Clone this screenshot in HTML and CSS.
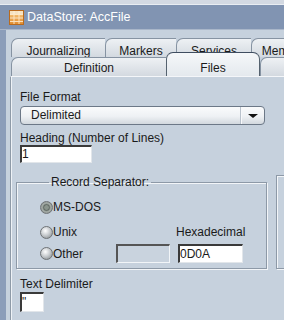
FILE: index.html
```html
<!DOCTYPE html>
<html lang="en">
<head>
    <meta charset="UTF-8">
    <title>DataStore: AccFile</title>
    <link rel="stylesheet" href="styles.css">
</head>
<body>
    <div class="strip"></div>
    <div class="titlebar">
        <svg class="app-icon" width="15" height="15" viewBox="0 0 15 15">
            <defs>
                <linearGradient id="og" x1="0" y1="0" x2="0" y2="1">
                    <stop offset="0" stop-color="#fbd08a"/>
                    <stop offset="1" stop-color="#e08a2c"/>
                </linearGradient>
            </defs>
            <rect x="0.5" y="0.5" width="14" height="14" fill="url(#og)" stroke="#b86a1e"/>
            <rect x="1" y="1" width="13" height="3" fill="#f6e2c0"/>
            <path d="M1 4.5H14M1 8H14M1 11.5H14M5 1V14M10 1V14" stroke="#fff3df" stroke-width="1" opacity="0.8"/>
        </svg>
        <span class="title">DataStore: AccFile</span>
    </div>
    <div class="frame">
        <div class="tabrow back">
            <div class="tab w94">Journalizing</div>
            <div class="tab w71">Markers</div>
            <div class="tab w75">Services</div>
            <div class="tab w54">Memo</div>
        </div>
        <div class="tabrow front">
            <div class="tab w155">Definition</div>
            <div class="tab w94 active">Files</div>
            <div class="tab w95"></div>
        </div>
        <div class="panel">
            <div class="label">File Format</div>
            <div class="combo">
                <span class="combo-text">Delimited</span>
                <span class="combo-btn"><span class="arrow"></span></span>
            </div>
            <div class="label gap">Heading (Number of Lines)</div>
            <div class="input w72">1</div>

            <div class="groups">
                <fieldset class="group sep">
                    <legend>Record Separator:</legend>
                    <div class="sep-grid">
                        <div class="radio-row r1"><span class="radio on"></span>MS-DOS</div>
                        <div class="radio-row r2"><span class="radio"></span>Unix</div>
                        <div class="hex-label">Hexadecimal</div>
                        <div class="radio-row r3"><span class="radio"></span>Other</div>
                        <div class="input disabled other"></div>
                        <div class="input hex">0D0A</div>
                    </div>
                </fieldset>
                <fieldset class="group next"></fieldset>
            </div>

            <div class="label gap2">Text Delimiter</div>
            <div class="input delim">"</div>
        </div>
    </div>
</body>
</html>
```

FILE: styles.css
```css
body {
    margin: 0;
    width: 284px;
    height: 320px;
    overflow: hidden;
    background: #c6d1dd;
    font-family: "Liberation Sans", Arial, sans-serif;
    font-size: 12px;
    color: #1a1a1a;
}
.strip {
    height: 4px;
    background: #d3d9e2;
    border-bottom: 1px solid #e9edf2;
}
.titlebar {
    height: 24px;
    display: flex;
    align-items: center;
    padding-left: 9px;
    background: #8194b2;
    border-bottom: 1px solid #a9b6c9;
}
.app-icon {
    flex: none;
}
.title {
    margin-left: 3px;
    color: #fff;
    font-size: 12.5px;
}
.frame {
    width: 420px;
    border-left: 6px solid #8b9db9;
    padding: 8px 0 0 4px;
    background: #c6d1dd;
}
.tabrow {
    display: flex;
    align-items: flex-end;
    margin-left: 1px;
    height: 19px;
}
.tab {
    flex: none;
    box-sizing: border-box;
    text-align: center;
    border-top: 1px solid #8693a2;
    border-left: 1px solid #8693a2;
    border-radius: 7px 0 0 0;
    background: linear-gradient(#eef1f4, #d3d9e0);
    white-space: nowrap;
    overflow: hidden;
}
.back .tab {
    height: 19px;
    padding-top: 6px;
    line-height: 13px;
}
.front .tab {
    height: 19px;
    padding-top: 3px;
    line-height: 14px;
}
.front .tab.active {
    height: 24px;
    margin-top: -5px;
    padding-top: 8px;
    border-top-color: #3f4d60;
    border-left-color: #55626f;
    border-right: 1px solid #55626f;
    border-radius: 7px 7px 0 0;
    background: linear-gradient(#f5f7f9, #e4e9ee);
}
.w54 { width: 54px; }
.w71 { width: 71px; }
.w72 { width: 72px; }
.w75 { width: 75px; }
.w94 { width: 94px; }
.w95 { width: 95px; }
.w155 { width: 155px; }

.panel {
    border-top: 1px solid #f4f6f9;
    border-left: 1px solid #8e9aa7;
    box-shadow: inset 1px 0 0 #eef2f6;
    padding: 13px 0 0 9px;
    height: 240px;
}
.label {
    line-height: 14px;
    height: 14px;
}
.label.gap {
    margin-top: 6px;
}
.label.gap2 {
    margin-top: 8px;
}
.combo {
    margin-top: 2px;
    width: 245px;
    height: 19px;
    box-sizing: border-box;
    display: flex;
    border: 1px solid #6c7887;
    border-radius: 4px;
    background: linear-gradient(#fafbfc, #eef1f4 55%, #d2d8de);
}
.combo-text {
    flex: 1;
    padding-left: 10px;
    line-height: 17px;
}
.combo-btn {
    width: 22px;
    display: flex;
    align-items: center;
    justify-content: center;
    border-left: 1px solid #f8f9fb;
    box-shadow: -1px 0 0 #b9c2cc;
}
.arrow {
    width: 0;
    height: 0;
    border-left: 5px solid transparent;
    border-right: 5px solid transparent;
    border-top: 4px solid #111;
    margin-top: 1px;
}
.input {
    box-sizing: border-box;
    height: 18px;
    background: #fff;
    border-top: 2px solid #3a3a3a;
    border-left: 2px solid #3a3a3a;
    border-right: 1px solid #e2e6ea;
    border-bottom: 1px solid #e2e6ea;
    line-height: 15px;
}
.groups {
    display: flex;
    gap: 9px;
    margin: 12px 0 0 -4px;
}
.group {
    flex: none;
    margin: 0;
    padding: 0;
    min-inline-size: 0;
    border: 1px solid #8d99a7;
    box-shadow: 1px 1px 0 #f2f5f8, inset 1px 1px 0 #f2f5f8;
}
.group.sep {
    width: 251px;
    box-sizing: border-box;
    padding: 11px 0 5px 23px;
}
.group.next {
    width: 120px;
}
.group legend {
    margin-left: 9px;
    padding: 0 2px;
    line-height: 14px;
}
.sep-grid {
    display: grid;
    grid-template-columns: 68px 54px 65px;
    grid-template-rows: 14px 25px 24px;
    column-gap: 8px;
    align-items: end;
}
.radio-row {
    display: flex;
    align-items: center;
    height: 14px;
    grid-column: 1;
}
.r1 { grid-row: 1; }
.r2 { grid-row: 2; }
.r3 { grid-row: 3; align-self: center; margin-top: 5px; }
.radio {
    width: 13px;
    height: 13px;
    box-sizing: border-box;
    border-radius: 50%;
    border: 1px solid #6f7376;
    background: radial-gradient(circle at 40% 35%, #ffffff, #c9cdd0 45%, #7f8487);
}
.radio.on {
    background: radial-gradient(circle, #8a948c 0, #8a948c 25%, #5f6862 35%, #a5aca7 55%, #7b8280);
}
.hex-label {
    grid-column: 3;
    grid-row: 2;
    line-height: 14px;
    margin-left: -2px;
}
.input.other {
    grid-column: 2;
    grid-row: 3;
    height: 19px;
    background: #c9d3de;
    border-top-color: #555;
    border-left-color: #555;
    border-right-color: #f2f5f8;
    border-bottom-color: #f2f5f8;
}
.input.hex {
    grid-column: 3;
    grid-row: 3;
    height: 19px;
    line-height: 16px;
}
.input.delim {
    margin-top: 1px;
    width: 24px;
    height: 20px;
    line-height: 17px;
}
```
